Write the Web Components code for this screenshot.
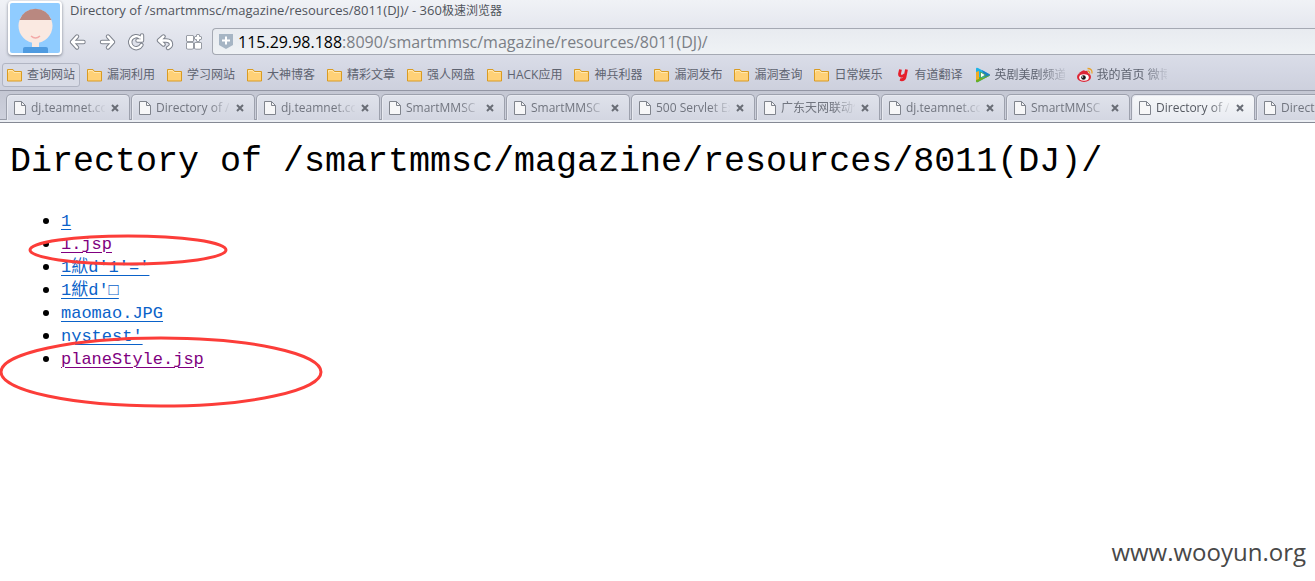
<!DOCTYPE html>
<html lang="zh-CN">
<head>
<meta charset="utf-8">
<title>Directory of /smartmmsc/magazine/resources/8011(DJ)/</title>
<style>
body { margin: 0; background: #fff; font-family: "Open Sans", "Noto Sans CJK SC", sans-serif; }
</style>
</head>
<body>
<browser-window></browser-window>
<script>
const define = (name, html, setup) => {
  const template = document.createElement('template');
  template.innerHTML = html;
  customElements.define(name, class extends HTMLElement {
    constructor() {
      super();
      this.attachShadow({ mode: 'open' }).append(template.content.cloneNode(true));
    }
    connectedCallback() { if (setup) setup(this, this.shadowRoot); }
  });
};

define('user-avatar', `
<style>
:host { display: block; width: 50px; height: 50px; border: 2px solid #fff; border-radius: 4px; box-shadow: 0 1px 3px #7c828f; background: #90ccff; }
svg { display: block; }
</style>
<svg width="50" height="50" viewBox="0 0 50 50" role="img" aria-label="avatar">
<path d="M13 50v-4q0-2 2-2h21q2 0 2 2v4z" fill="#4f9be0"/>
<path d="M22 36h7v8h-7z" fill="#fae9e1"/>
<circle cx="25.500" cy="23" r="17" fill="#fae9e1"/>
<path d="M9.500 17a17 17 0 0 1 32 0z" fill="#b98880"/>
<path d="M21 33q4.500 4 9 0" fill="none" stroke="#f3aaa8" stroke-width="1.500"/>
</svg>`);

define('nav-button', `
<style>
:host { display: block; }
button { display: block; width: 19px; height: 20px; padding: 0; border: 0; background: none; }
svg { display: block; fill: none; stroke-linecap: round; stroke-linejoin: round; }
</style>
<button type="button"><svg width="19" height="20" viewBox="0 0 19 20"><path class="o" stroke="#7e838d" stroke-width="4.400"/><path class="i" stroke="#fff" stroke-width="2.400"/></svg></button>`,
(el, root) => {
  const shapes = {
    back: 'M8 4.500L3 10l5 5.500M3 10h11.500',
    forward: 'M10 4.500l5 5.500-5 5.500M15 10H4',
    reload: 'M14.500 13A6 6 0 1 1 13 5.500M15 3.500v5h-4.500',
    undo: 'M7.500 4.500L3 8.500l4.500 4M3 8.500h7q5 0 5 4 0 2-3 3.500',
    apps: 'M3 5h4v3H3zM3 12h4v3.500H3zM11 12h4v3.500h-4zM13 4v4M11 6h4'
  };
  const kind = el.getAttribute('kind');
  root.querySelectorAll('path').forEach(p => p.setAttribute('d', shapes[kind]));
  if (kind === 'apps') {
    root.querySelector('.i').setAttribute('fill', '#fff');
    root.querySelector('.o').setAttribute('stroke-width', '4');
  }
  root.querySelector('button').setAttribute('aria-label', kind);
});

define('address-bar', `
<style>
:host { display: flex; align-items: center; flex: 1; min-width: 0; height: 25px; border: 1px solid #a5a9b3; border-right: 0; border-radius: 4px 0 0 4px; background: linear-gradient(#e8ebf0, #eff2f5); }
svg { flex: none; margin-left: 6px; }
a { margin-left: 5px; color: #7b7f86; font-size: 16px; line-height: 24px; text-decoration: none; white-space: nowrap; }
b { color: #000; font-weight: 400; }
</style>
<svg width="14" height="15" viewBox="0 0 14 15"><path d="M0 0h14v11l-7 4-7-4z" fill="#a6b5c4"/><path d="M7 2.500v8M3 6.500h8" stroke="#fff" stroke-width="2"/></svg>
<a href="#"><b>115.29.98.188</b>:8090/smartmmsc/magazine/resources/8011(DJ)/</a>`);

define('bookmark-item', `
<style>
:host { display: block; flex: none; }
a { display: flex; align-items: center; box-sizing: border-box; height: 24px; padding: 0 4px; border: 1px solid transparent; border-radius: 3px; color: #5e6370; font-size: 12px; line-height: 20px; text-decoration: none; white-space: nowrap; }
:host([hot]) a { border-color: #b1b5c3; background: #d8dbe6; }
svg { flex: none; margin-right: 4px; }
span { overflow: hidden; }
:host([fade]) span { width: 70px; -webkit-mask-image: linear-gradient(to right, #000 65%, #0002); mask-image: linear-gradient(to right, #000 65%, #0002); }
</style>
<a href="#"><svg width="16" height="16" viewBox="0 0 16 16"></svg><span><slot></slot></span></a>`,
(el, root) => {
  const icons = {
    folder: '<path d="M.5 2.500h5.500l1.500 2h7v9.500H.5z" fill="#ffd177" stroke="#d99b22"/><path d="M1.500 5.500V3.500H5.500l1.500 2h6.500" fill="none" stroke="#ffe9b1"/>',
    youdao: '<path d="M5.500 2.500L4.500 7q0 2.500 2.500 2.200 2.300-.2 2.800-2.200M11.500 2.500l-1.500 7.500q-1 3.500-5 2.500" fill="none" stroke="#e61f2b" stroke-width="2.800"/>',
    video: '<path d="M1 2q0-2 2-1l11 6q2 1 0 2L3 15q-2 1-2-1z" fill="#1eb3e6"/><path d="M7 3l7 4q2 1 0 2l-4 2z" fill="#1d80c4"/><path d="M1 9l6 2 8-3q0 .6-1 1L3 15q-2 1-2-1z" fill="#6fae1d"/><path d="M1 5l3-1v8l-3 1z" fill="#efac23"/><path d="M5.500 5l5 3-5 3z" fill="#fff" stroke="#3c9c42" stroke-width=".8"/>',
    weibo: '<ellipse cx="7" cy="10" rx="7" ry="5" fill="#dc2534"/><path d="M2 6q5-4 6-2 3-1 3 2" fill="#dc2534"/><ellipse cx="7" cy="10.500" rx="4.800" ry="3.300" fill="#fff"/><circle cx="6.500" cy="10.500" r="2.300" fill="#161616"/><circle cx="5.600" cy="10" r=".7" fill="#fff"/><path d="M10.500 1.500q5 0 4.500 5M10.500 4q2.500 0 2 2.500" fill="none" stroke="#e9a32c" stroke-width="1.300"/>'
  };
  root.querySelector('svg').innerHTML = icons[el.getAttribute('icon') || 'folder'];
});

define('browser-tab', `
<style>
:host { display: flex; align-items: center; flex: none; box-sizing: border-box; width: 124px; height: 26px; padding-left: 7px; border: 1px solid #9da1ad; border-bottom: 0; border-radius: 5px 5px 0 0; background: linear-gradient(#dfe2eb, #d3d6e1); color: #71757f; box-shadow: inset 1px 1px #e7e9f0; }
:host([active]) { position: relative; background: linear-gradient(#f7f8fa, #e8ebf1); color: #565a62; }
svg { flex: none; }
span { width: 74px; margin: 0 5px; overflow: hidden; font-size: 12px; line-height: 20px; white-space: nowrap; -webkit-mask-image: linear-gradient(to right, #000 72%, #0001); mask-image: linear-gradient(to right, #000 72%, #0001); }
button { flex: none; width: 10px; height: 16px; padding: 0; border: 0; background: none; }
</style>
<svg width="12" height="14" viewBox="0 0 12 14"><path d="M.5.5h7l4 4v9H.5z" fill="#f7f7f8" stroke="#80848d"/><path d="M7.500.5v4h4" fill="none" stroke="#80848d"/></svg>
<span><slot></slot></span>
<button type="button" aria-label="close"><svg width="8" height="8" viewBox="0 0 8 8"><path d="M1 1l6 6M7 1L1 7" stroke="#696d76" stroke-width="2"/></svg></button>`);

define('browser-chrome', `
<style>
:host { display: block; overflow: hidden; background: linear-gradient(#f0f2f6, #d6d9e5 65px, #cdd0dd 90px); }
.top { display: flex; height: 62px; padding-left: 8px; box-sizing: border-box; }
user-avatar { flex: none; margin-top: 1px; }
.right { flex: 1; min-width: 0; margin-left: 7px; }
.title { height: 28px; padding-left: 1px; box-sizing: border-box; color: #50545c; font-size: 13px; line-height: 20px; white-space: nowrap; }
.title span { font-size: 12px; }
.tools { display: flex; align-items: center; gap: 10px; }
.bookmarks { display: flex; gap: 2px; height: 28px; padding: 1px 0 0 2px; box-sizing: border-box; }
.tabs { display: flex; gap: 1px; height: 29px; padding: 3px 0 0 6px; border-top: 1px solid #9396a4; box-sizing: border-box; background: linear-gradient(#c4c7d3, #cdd0dc); }
.edge { height: 4px; box-sizing: border-box; border-top: 1px solid #989ca8; border-bottom: 1px solid #858994; background: #eceff4; }
nav-button:nth-child(5) { margin-right: -2px; }
</style>
<div class="top"><user-avatar></user-avatar><div class="right">
<div class="title">Directory of /smartmmsc/magazine/resources/8011(DJ)/ - 360<span>极速浏览器</span></div>
<div class="tools"><nav-button kind="back"></nav-button><nav-button kind="forward"></nav-button><nav-button kind="reload"></nav-button><nav-button kind="undo"></nav-button><nav-button kind="apps"></nav-button><address-bar></address-bar></div>
</div></div>
<nav class="bookmarks"><bookmark-item hot>查询网站</bookmark-item><bookmark-item>漏洞利用</bookmark-item><bookmark-item>学习网站</bookmark-item><bookmark-item>大神博客</bookmark-item><bookmark-item>精彩文章</bookmark-item><bookmark-item>强人网盘</bookmark-item><bookmark-item>HACK应用</bookmark-item><bookmark-item>神兵利器</bookmark-item><bookmark-item>漏洞发布</bookmark-item><bookmark-item>漏洞查询</bookmark-item><bookmark-item>日常娱乐</bookmark-item><bookmark-item icon="youdao">有道翻译</bookmark-item><bookmark-item icon="video" fade>英剧美剧频道</bookmark-item><bookmark-item icon="weibo" fade>我的首页 微博</bookmark-item></nav>
<div class="tabs"><browser-tab>dj.teamnet.com</browser-tab><browser-tab>Directory of /</browser-tab><browser-tab>dj.teamnet.com</browser-tab><browser-tab>SmartMMSC</browser-tab><browser-tab>SmartMMSC</browser-tab><browser-tab>500 Servlet Ex</browser-tab><browser-tab>广东天网联动传</browser-tab><browser-tab>dj.teamnet.com</browser-tab><browser-tab>SmartMMSC</browser-tab><browser-tab active>Directory of /</browser-tab><browser-tab>Directory of /</browser-tab></div>
<div class="edge"></div>`);

define('directory-listing', `
<style>
:host { display: block; position: relative; padding: 17px 10px 0; color: #000; font-family: "Liberation Mono", "Noto Sans CJK SC", monospace; }
h1 { margin: 0; font-size: 35px; line-height: 44px; font-weight: 400; white-space: nowrap; }
ul { margin: 25px 0 0; padding: 0 0 0 51px; font-size: 20px; }
li { height: 23px; line-height: 23px; }
a { color: #0a62c9; font-size: 17px; text-decoration: underline; text-underline-offset: 3px; text-decoration-thickness: 1px; }
a.visited { color: #800080; }
.marks { position: absolute; left: 0; top: 0; fill: none; stroke: #fc3d39; stroke-width: 3; pointer-events: none; }
</style>
<h1>Directory of /smartmmsc/magazine/resources/8011(DJ)/</h1>
<ul>
<li><a href="#">1</a></li>
<li><a class="visited" href="#">1.jsp</a></li>
<li><a href="#">1絥d'1'='</a></li>
<li><a href="#">1絥d'□</a></li>
<li><a href="#">maomao.JPG</a></li>
<li><a href="#">nystest'</a></li>
<li><a class="visited" href="#">planeStyle.jsp</a></li>
</ul>
<svg class="marks" width="330" height="300" viewBox="0 0 330 300"><ellipse cx="128" cy="127" rx="98" ry="14"/><ellipse cx="161" cy="249" rx="160" ry="34"/></svg>`);

define('browser-window', `
<style>
:host { display: flex; flex-direction: column; min-height: 100vh; overflow: hidden; }
directory-listing { flex: 1; }
footer { padding: 0 9px 11px; color: #484848; font-size: 24px; line-height: 36px; text-align: right; }
</style>
<browser-chrome></browser-chrome>
<directory-listing></directory-listing>
<footer>www.wooyun.org</footer>`);
</script>
</body>
</html>
